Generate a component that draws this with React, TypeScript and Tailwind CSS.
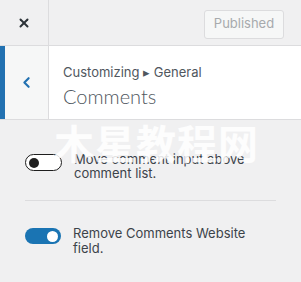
import { X, ChevronLeft } from 'lucide-react';

function Toggle({ on }: { on: boolean }) {
  if (on) {
    return (
      <div className="w-[36px] h-[16px] shrink-0 rounded-full bg-[#1a74b3] flex items-center justify-end px-[3px] mt-[2px]">
        <div className="w-[11px] h-[11px] rounded-full bg-white" />
      </div>
    );
  }
  return (
    <div className="w-[37px] h-[17px] shrink-0 rounded-full border-[1.5px] border-[#1e1e1e] bg-white flex items-center px-[3px] mt-[2px]">
      <div className="w-[10px] h-[10px] rounded-full bg-[#1e1e1e]" />
    </div>
  );
}

export default function App() {
  return (
    <div className="relative w-[301px] h-[282px] overflow-hidden bg-[#f0f0f1] text-[#3c434a] font-['Inter',sans-serif]">
      <div className="h-[46px] flex border-b border-[#dcdcde] bg-[#f0f0f1]">
        <button className="w-[49px] flex items-center justify-center border-r border-[#dcdcde]">
          <X className="w-[14px] h-[14px] text-[#2c3338]" strokeWidth={3.4} />
        </button>
        <div className="flex-1 flex items-center justify-end pr-[17px] pt-[3px]">
          <div className="h-[29px] w-[80px] flex items-center justify-center rounded-[3px] border border-[#dcdcde] bg-[#f6f7f7] text-[13px] text-[#a7aaad]">
            Published
          </div>
        </div>
      </div>

      <div className="h-[74px] flex border-b border-[#dcdcde] bg-white">
        <div className="w-[49px] flex items-center justify-center border-l-[5px] border-l-[#2271b1] border-r border-r-[#dcdcde] bg-[#f6f7f7]">
          <ChevronLeft className="w-[17px] h-[17px] text-[#2271b1]" strokeWidth={3} />
        </div>
        <div className="flex-1 pl-[14px] pt-[17px]">
          <div className="text-[13px] leading-[18px] text-[#50575e]">Customizing ▸ General</div>
          <div className="text-[20px] leading-[30px] font-light text-[#50575e] font-['Lato',sans-serif]">Comments</div>
        </div>
      </div>

      <div className="px-[25px] pt-[32px]">
        <div className="flex gap-[12px] pb-[20px] border-b border-[#dcdcde]">
          <Toggle on={false} />
          <div className="text-[13px] leading-[14px] text-[#3c434a]">Move comment input above comment list.</div>
        </div>
        <div className="flex gap-[12px] pt-[25px]">
          <Toggle on={true} />
          <div className="text-[13px] leading-[15px] text-[#3c434a]">Remove Comments Website field.</div>
        </div>
      </div>

      <div className="absolute left-[54px] top-[120px] text-[40px] leading-[44px] font-bold text-white/85 tracking-[1px] font-['Noto_Sans_CJK_SC',sans-serif] pointer-events-none">
        木星教程网
      </div>
    </div>
  );
}
